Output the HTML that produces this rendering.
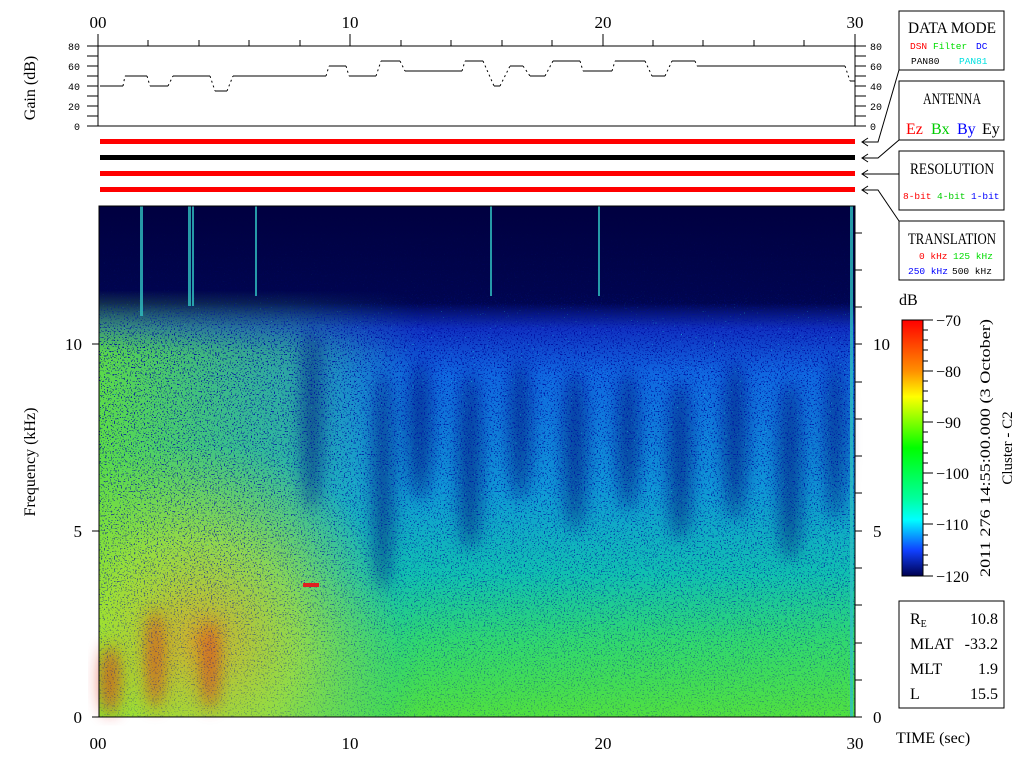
<!DOCTYPE html>
<html><head><meta charset="utf-8"><style>
html,body{margin:0;padding:0;background:#fff}
svg{display:block}
text{font-family:"Liberation Mono",monospace}
.s{font-family:"Liberation Serif",serif}
</style></head><body>
<svg width="1024" height="768" viewBox="0 0 1024 768" xmlns="http://www.w3.org/2000/svg">
<defs>
<linearGradient id="v" x1="0" y1="206" x2="0" y2="717" gradientUnits="userSpaceOnUse">
<stop offset="0" stop-color="#000040"/>
<stop offset="0.19" stop-color="#000550"/>
<stop offset="0.24" stop-color="#1030c0"/>
<stop offset="0.33" stop-color="#1068e0"/>
<stop offset="0.55" stop-color="#1098d8"/>
<stop offset="0.72" stop-color="#10c0b0"/>
<stop offset="0.85" stop-color="#30d870"/>
<stop offset="1" stop-color="#50e040"/>
</linearGradient>
<linearGradient id="lh" x1="99" y1="0" x2="420" y2="0" gradientUnits="userSpaceOnUse">
<stop offset="0" stop-color="#60e040" stop-opacity="0.95"/>
<stop offset="0.6" stop-color="#40d080" stop-opacity="0.6"/>
<stop offset="1" stop-color="#20c0c0" stop-opacity="0"/>
</linearGradient>
<linearGradient id="lv" x1="0" y1="290" x2="0" y2="717" gradientUnits="userSpaceOnUse">
<stop offset="0" stop-color="#fff" stop-opacity="0"/>
<stop offset="0.15" stop-color="#fff" stop-opacity="1"/>
<stop offset="1" stop-color="#fff" stop-opacity="1"/>
</linearGradient>
<mask id="lm"><rect x="99" y="206" width="756" height="511" fill="url(#lv)"/></mask>
<radialGradient id="yo" cx="200" cy="640" r="200" gradientUnits="userSpaceOnUse">
<stop offset="0" stop-color="#f0a020" stop-opacity="0.8"/>
<stop offset="0.5" stop-color="#e0e020" stop-opacity="0.5"/>
<stop offset="1" stop-color="#c0e020" stop-opacity="0"/>
</radialGradient>
<linearGradient id="cb" x1="0" y1="320" x2="0" y2="576" gradientUnits="userSpaceOnUse">
<stop offset="0" stop-color="#ff0000"/>
<stop offset="0.2" stop-color="#ff9000"/>
<stop offset="0.3" stop-color="#ffff00"/>
<stop offset="0.5" stop-color="#00ff00"/>
<stop offset="0.7" stop-color="#00ffa0"/>
<stop offset="0.78" stop-color="#00ffff"/>
<stop offset="0.9" stop-color="#1040ff"/>
<stop offset="1" stop-color="#000050"/>
</linearGradient>
<filter id="bl"><feGaussianBlur stdDeviation="8"/></filter>
<filter id="nd" x="0" y="0" width="100%" height="100%">
<feTurbulence type="fractalNoise" baseFrequency="0.7" numOctaves="1" seed="3" result="t"/>
<feComponentTransfer in="t" result="a"><feFuncA type="discrete" tableValues="0 0 0 0 0 1 1 1"/></feComponentTransfer>
<feFlood flood-color="#0010a0"/>
<feComposite in2="a" operator="in"/>
</filter>
<filter id="nc" x="0" y="0" width="100%" height="100%">
<feTurbulence type="fractalNoise" baseFrequency="0.7" numOctaves="1" seed="9" result="t"/>
<feComponentTransfer in="t" result="a"><feFuncA type="discrete" tableValues="0 0 0 0 0 0 1 1"/></feComponentTransfer>
<feFlood flood-color="#20e0e0"/>
<feComposite in2="a" operator="in"/>
</filter>
<linearGradient id="nv" x1="0" y1="206" x2="0" y2="717" gradientUnits="userSpaceOnUse">
<stop offset="0" stop-color="#fff" stop-opacity="0"/>
<stop offset="0.17" stop-color="#fff" stop-opacity="0.1"/>
<stop offset="0.25" stop-color="#fff" stop-opacity="0.9"/>
<stop offset="0.7" stop-color="#fff" stop-opacity="0.6"/>
<stop offset="1" stop-color="#fff" stop-opacity="0.25"/>
</linearGradient>
<mask id="nm"><rect x="99" y="206" width="756" height="511" fill="url(#nv)"/></mask>
</defs>

<!-- spectrogram -->
<rect x="99" y="206" width="756" height="511" fill="url(#v)"/>
<rect x="99" y="206" width="756" height="511" fill="url(#lh)" mask="url(#lm)"/>
<rect x="99" y="450" width="330" height="267" fill="url(#yo)"/>
<g filter="url(#bl)" fill="#001070" opacity="0.55">
<ellipse cx="312" cy="420" rx="10" ry="90"/>
<ellipse cx="383" cy="480" rx="10" ry="110"/>
<ellipse cx="420" cy="430" rx="12" ry="70"/>
<ellipse cx="470" cy="460" rx="12" ry="90"/>
<ellipse cx="520" cy="430" rx="11" ry="70"/>
<ellipse cx="575" cy="450" rx="12" ry="80"/>
<ellipse cx="628" cy="440" rx="11" ry="70"/>
<ellipse cx="680" cy="460" rx="12" ry="80"/>
<ellipse cx="735" cy="440" rx="12" ry="80"/>
<ellipse cx="790" cy="470" rx="12" ry="90"/>
<ellipse cx="835" cy="440" rx="10" ry="80"/>
</g>
<g fill="#e02010" opacity="0.6" filter="url(#bl)">
<ellipse cx="110" cy="680" rx="10" ry="35"/>
<ellipse cx="155" cy="660" rx="8" ry="50"/>
<ellipse cx="210" cy="665" rx="8" ry="45"/>
</g>
<g mask="url(#nm)">
<rect x="99" y="206" width="756" height="511" filter="url(#nd)"/>
<rect x="99" y="206" width="756" height="511" filter="url(#nc)" opacity="0.7"/>
</g>
<g fill="#30c0c0" opacity="0.8">
<rect x="140" y="206" width="3" height="110"/><rect x="188" y="206" width="3" height="100"/>
<rect x="192" y="206" width="2" height="100"/><rect x="255" y="206" width="2" height="90"/>
<rect x="490" y="206" width="2" height="90"/><rect x="598" y="206" width="2" height="90"/>
<rect x="850" y="206" width="3" height="511"/>
</g>
<rect x="303" y="583" width="16" height="4" fill="#e02020"/>
<rect x="99" y="206" width="756" height="511" fill="none" stroke="#000"/>

<!-- spectrogram axes -->
<g stroke="#000">
<line x1="99" y1="717" x2="855" y2="717"/>
<line x1="99" y1="206" x2="99" y2="717"/><line x1="855" y1="206" x2="855" y2="717"/>
<line x1="92" y1="717" x2="99" y2="717"/><line x1="92" y1="531" x2="99" y2="531"/><line x1="92" y1="344" x2="99" y2="344"/>
<line x1="855" y1="717" x2="862" y2="717"/><line x1="855" y1="531" x2="862" y2="531"/><line x1="855" y1="344" x2="862" y2="344"/>
<line x1="855" y1="233" x2="862" y2="233"/><line x1="855" y1="270" x2="862" y2="270"/><line x1="855" y1="307" x2="862" y2="307"/>
<line x1="855" y1="382" x2="862" y2="382"/><line x1="855" y1="419" x2="862" y2="419"/><line x1="855" y1="456" x2="862" y2="456"/><line x1="855" y1="493" x2="862" y2="493"/>
<line x1="855" y1="568" x2="862" y2="568"/><line x1="855" y1="605" x2="862" y2="605"/><line x1="855" y1="643" x2="862" y2="643"/><line x1="855" y1="680" x2="862" y2="680"/>
</g>
<g class="s" font-size="17" fill="#000">
<text x="98" y="749" text-anchor="middle" class="s">00</text>
<text x="350" y="749" text-anchor="middle" class="s">10</text>
<text x="603" y="749" text-anchor="middle" class="s">20</text>
<text x="855" y="749" text-anchor="middle" class="s">30</text>
<text x="98" y="28" text-anchor="middle" class="s">00</text>
<text x="350" y="28" text-anchor="middle" class="s">10</text>
<text x="603" y="28" text-anchor="middle" class="s">20</text>
<text x="855" y="28" text-anchor="middle" class="s">30</text>
<text x="82" y="723" text-anchor="end" class="s">0</text>
<text x="82" y="537" text-anchor="end" class="s">5</text>
<text x="82" y="350" text-anchor="end" class="s">10</text>
<text x="873" y="723" class="s">0</text>
<text x="873" y="537" class="s">5</text>
<text x="873" y="350" class="s">10</text>
<text x="35" y="462" transform="rotate(-90 35 462)" text-anchor="middle" class="s" font-size="16">Frequency (kHz)</text>
<text x="35" y="88" transform="rotate(-90 35 88)" text-anchor="middle" class="s" font-size="16">Gain (dB)</text>
<text x="896" y="743" class="s" font-size="16">TIME (sec)</text>
</g>

<!-- gain plot -->
<g stroke="#000" fill="none">
<line x1="87" y1="46" x2="855" y2="46"/><line x1="87" y1="126" x2="855" y2="126"/>
<line x1="98" y1="34" x2="98" y2="126"/><line x1="855" y1="34" x2="855" y2="126"/>
<path d="M148 40V46M199 40V46M249 40V46M300 40V46M350 34V46M401 40V46M451 40V46M502 40V46M552 40V46M603 34V46M653 40V46M703 40V46M754 40V46M804 40V46"/>
<path d="M87 56H98M87 66H98M87 76H98M87 86H98M87 96H98M87 106H98M87 116H98"/>
<path d="M855 56H866M855 66H866M855 76H866M855 86H866M855 96H866M855 106H866M855 116H866M855 46H866M855 126H866"/>
<path d="M100 86H123M125 76H147M150 86H168M173 76H210M215 91H227M233 76H326M329 66H346M349 76H376M381 61H400M405 71H462M465 61H483M494 86H500M510 66H523M530 76H545M553 61H580M583 71H612M615 61H645M652 76H665M672 61H695M697 66H845M850 81H855"/>
<path stroke-dasharray="2 3" d="M123 86L125 76M147 76L150 86M168 86L173 76M210 76L215 91M227 91L233 76M326 76L329 66M346 66L349 76M376 76L381 61M400 61L405 71M462 71L465 61M483 61L494 86M500 86L510 66M523 66L530 76M545 76L553 61M580 61L583 71M612 71L615 61M645 61L652 76M665 76L672 61M695 61L697 66M845 66L850 81"/>
</g>
<g font-size="10" fill="#000">
<text x="80" y="50" text-anchor="end">80</text><text x="80" y="70" text-anchor="end">60</text>
<text x="80" y="90" text-anchor="end">40</text><text x="80" y="110" text-anchor="end">20</text>
<text x="80" y="130" text-anchor="end">0</text>
<text x="870" y="50">80</text><text x="870" y="70">60</text><text x="870" y="90">40</text><text x="870" y="110">20</text><text x="870" y="130">0</text>
</g>

<!-- status bars -->
<rect x="100" y="139" width="755" height="5" fill="#ff0000"/>
<rect x="100" y="155" width="755" height="5" fill="#000"/>
<rect x="100" y="171" width="755" height="5" fill="#ff0000"/>
<rect x="100" y="187" width="755" height="5" fill="#ff0000"/>

<!-- right boxes -->
<g fill="none" stroke="#000">
<rect x="899" y="11" width="105" height="59"/>
<rect x="899" y="81" width="105" height="59"/>
<rect x="899" y="151" width="105" height="59"/>
<rect x="899" y="221" width="105" height="59"/>
<path d="M899 70L878 142H862M868 138L862 142L868 146"/>
<path d="M899 140L878 158H862M868 154L862 158L868 162"/>
<path d="M899 174H862M868 170L862 174L868 178"/>
<path d="M899 221L878 190H862M868 186L862 190L868 194"/>
</g>
<g class="s" font-size="16" text-anchor="middle" fill="#000">
<text x="952" y="33" class="s" textLength="88" lengthAdjust="spacingAndGlyphs">DATA MODE</text>
<text x="952" y="104" class="s" textLength="58" lengthAdjust="spacingAndGlyphs">ANTENNA</text>
<text x="952" y="174" class="s" textLength="84" lengthAdjust="spacingAndGlyphs">RESOLUTION</text>
<text x="952" y="244" class="s" textLength="88" lengthAdjust="spacingAndGlyphs">TRANSLATION</text>
</g>
<g font-size="9.5">
<text x="910" y="49" fill="#ff0000">DSN</text><text x="933" y="49" fill="#00dd00">Filter</text><text x="976" y="49" fill="#0000ff">DC</text>
<text x="911" y="64" fill="#000">PAN80</text><text x="959" y="64" fill="#00e0e0">PAN81</text>
<text x="903" y="199" fill="#ff0000">8-bit</text><text x="937" y="199" fill="#00cc00">4-bit</text><text x="971" y="199" fill="#0000ff">1-bit</text>
<text x="919" y="259" fill="#ff0000">0 kHz</text><text x="953" y="259" fill="#00dd00">125 kHz</text>
<text x="908" y="274" fill="#0000ff">250 kHz</text><text x="952" y="274" fill="#000">500 kHz</text>
</g>
<g class="s" font-size="16">
<text x="906" y="134" fill="#ff0000" class="s">Ez</text><text x="931" y="134" fill="#00cc00" class="s">Bx</text>
<text x="957" y="134" fill="#0000ff" class="s">By</text><text x="982" y="134" fill="#000" class="s">Ey</text>
</g>

<!-- colorbar -->
<rect x="902" y="320" width="21" height="256" fill="url(#cb)" stroke="#000"/>
<g stroke="#000"><path d="M923 320H933M923 371H933M923 422H933M923 473H933M923 524H933M923 576H933M923 330H928M923 340H928M923 350H928M923 361H928M923 381H928M923 391H928M923 401H928M923 412H928M923 432H928M923 442H928M923 453H928M923 463H928M923 483H928M923 494H928M923 504H928M923 514H928M923 535H928M923 545H928M923 555H928M923 565H928"/></g>
<g class="s" font-size="16" fill="#000">
<text x="899" y="305" class="s">dB</text>
<text x="936" y="326" class="s">−70</text><text x="936" y="377" class="s">−80</text><text x="936" y="428" class="s">−90</text>
<text x="936" y="479" class="s">−100</text><text x="936" y="530" class="s">−110</text><text x="936" y="582" class="s">−120</text>
<text x="990" y="448" transform="rotate(-90 990 448)" text-anchor="middle" class="s" font-size="15" textLength="258" lengthAdjust="spacingAndGlyphs">2011 276 14:55:00.000 (3 October)</text>
<text x="1012" y="448" transform="rotate(-90 1012 448)" text-anchor="middle" class="s" font-size="15">Cluster - C2</text>
</g>

<!-- ephemeris box -->
<rect x="899" y="601" width="105" height="107" fill="none" stroke="#000"/>
<g class="s" font-size="16" fill="#000">
<text x="910" y="624" class="s">R<tspan font-size="10" dy="3">E</tspan></text>
<text x="910" y="649" class="s">MLAT</text><text x="910" y="674" class="s">MLT</text><text x="910" y="699" class="s">L</text>
<text x="998" y="624" text-anchor="end" class="s">10.8</text><text x="998" y="649" text-anchor="end" class="s">-33.2</text>
<text x="998" y="674" text-anchor="end" class="s">1.9</text><text x="998" y="699" text-anchor="end" class="s">15.5</text>
</g>
</svg>
</body></html>
